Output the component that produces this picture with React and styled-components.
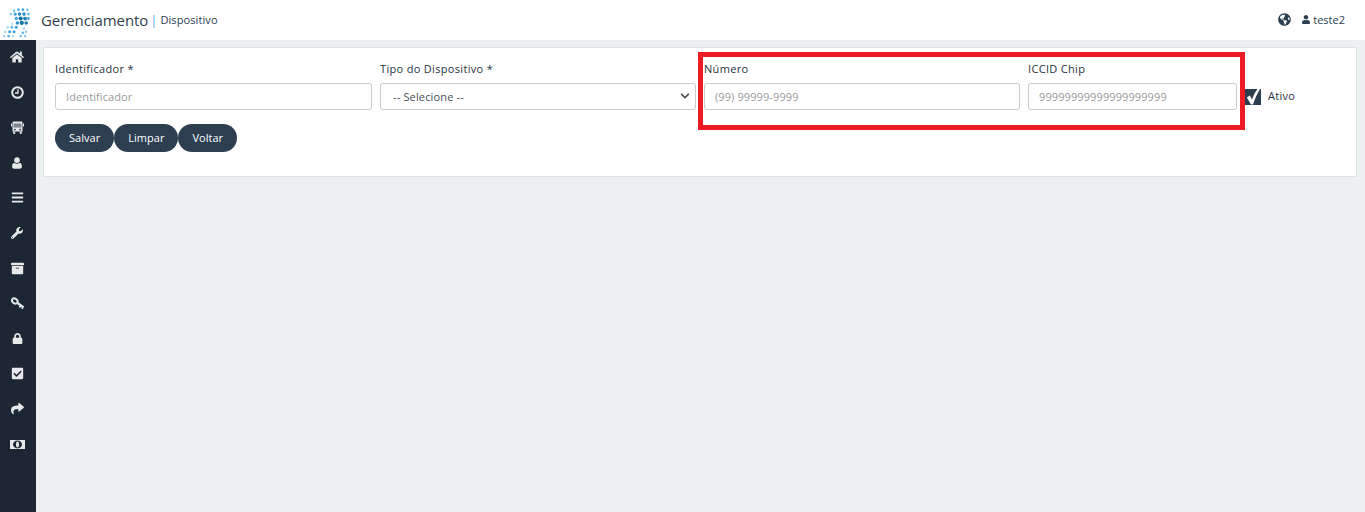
import React from 'react';
import styled, { createGlobalStyle } from 'styled-components';
import {
  FaHome, FaUser, FaBars, FaWrench, FaArchive, FaLock,
  FaCheckSquare, FaShare, FaGlobeAmericas, FaChevronDown,
} from 'react-icons/fa';

const GlobalStyle = createGlobalStyle`
  html, body {
    margin: 0;
    padding: 0;
    height: 100%;
    background: #ecf0f1;
    font-family: "Open Sans", "Liberation Sans", sans-serif;
    color: #2c3e50;
    overflow: hidden;
  }
  * { box-sizing: border-box; }
`;

const Page = styled.div`
  width: 1365px;
  height: 512px;
  display: flex;
  flex-direction: column;
`;

const Header = styled.header`
  height: 40px;
  background: #fff;
  display: flex;
  align-items: center;
  flex: none;
`;

const LogoBox = styled.div`
  width: 41px;
  flex: none;
  display: flex;
  padding-left: 2px;
`;

const Title = styled.span`
  font-size: 15px;
  font-weight: 500;
  letter-spacing: -0.08px;
  color: #333f4b;
  line-height: 40px;
`;

const Divider = styled.span`
  font-size: 13px;
  color: #5dade2;
  margin: 0 3px 0 2px;
`;

const SubTitle = styled.span`
  font-size: 11px;
  letter-spacing: 0.1px;
  color: #2c3e50;
  margin-top: -1px;
`;

const UserArea = styled.div`
  margin-left: auto;
  padding-right: 20px;
  display: flex;
  align-items: center;
  font-size: 11px;
  color: #2c3e50;
  margin-top: -1px;
`;

const GlobeIcon = styled(FaGlobeAmericas)`
  width: 13px;
  height: 13px;
  margin-right: 11px;
`;

const UserIcon = styled(FaUser)`
  width: 8px;
  height: 9px;
  margin-right: 3px;
`;

const Body = styled.div`
  flex: 1;
  display: flex;
  min-height: 0;
`;

const Sidebar = styled.nav`
  width: 36px;
  flex: none;
  background: #1c2733;
  padding-right: 2px;
  display: flex;
  flex-direction: column;
`;

const NavItem = styled.div`
  height: 35.2px;
  padding-bottom: 1px;
  display: flex;
  align-items: center;
  justify-content: center;
  color: #e6e8ea;
  svg {
    width: ${(p) => p.$size || 13}px;
    height: ${(p) => p.$size || 13}px;
  }
`;

const Main = styled.main`
  flex: 1;
  padding: 7px 8px 0 7px;
`;

const Card = styled.section`
  position: relative;
  height: 130px;
  background: #fff;
  border: 1px solid #dfe3e5;
  padding: 11px 11px 0;
`;

const FormRow = styled.div`
  display: grid;
  grid-template-columns: 317px 316px 316px 209px auto;
  column-gap: 8px;
`;

const Field = styled.div`
  display: flex;
  flex-direction: column;
`;

const Label = styled.label`
  font-size: 11px;
  font-weight: 500;
  line-height: 16px;
  letter-spacing: 0.32px;
  color: #28343f;
  margin-bottom: 5px;
  height: 19px;
  display: flex;
  align-items: center;
`;

const Input = styled.input`
  height: 27px;
  width: 100%;
  border: 1px solid #ccc;
  border-radius: 3px;
  padding: 0 10px;
  font-family: inherit;
  font-size: 11px;
  letter-spacing: 0.1px;
  outline: none;
  background: #fff;
  &::placeholder {
    color: #9a9a9a;
    opacity: 1;
  }
`;

const SelectBox = styled.div`
  height: 27px;
  border: 1px solid #ccc;
  border-radius: 3px;
  padding: 0 5px 0 12px;
  display: flex;
  align-items: center;
  justify-content: space-between;
  font-size: 11px;
  letter-spacing: 0.15px;
  color: #495057;
`;

const Chevron = styled(FaChevronDown)`
  width: 10px;
  height: 10px;
  color: #4a4f55;
  margin-top: -1px;
`;

const CheckField = styled.div`
  display: flex;
  align-items: center;
  margin-top: 24px;
  height: 27px;
`;

const CheckBoxMark = styled.span`
  position: relative;
  width: 16px;
  height: 16px;
  background: #2c3e50;
  margin-right: 7px;
  svg {
    position: absolute;
    left: 1px;
    top: -2px;
  }
`;

const CheckLabel = styled.span`
  font-size: 11px;
  font-weight: 500;
  letter-spacing: 0.3px;
  color: #28343f;
  margin-top: -2px;
`;

const Buttons = styled.div`
  display: flex;
  margin-top: 14px;
`;

const Button = styled.button`
  height: 28px;
  padding: 0 14px 2px;
  border: none;
  border-radius: 14px;
  background: #2c3e50;
  color: #fff;
  font-family: inherit;
  font-size: 11px;
  font-weight: 500;
  letter-spacing: 0.03px;
`;

const Highlight = styled.div`
  position: absolute;
  left: 654px;
  top: 4px;
  width: 547px;
  height: 78px;
  border: 5px solid #ed1c24;
  pointer-events: none;
`;

const dots = [
  [15, 10, 1.2, '#7cc4e8'], [19, 9, 1.3, '#5fb6e3'], [23, 9, 1.3, '#4aaadf'], [27, 9, 1.2, '#7cc4e8'],
  [12, 13, 1.2, '#8fcdec'], [16, 13, 1.5, '#3fa4dc'], [20, 13, 1.6, '#2a8fcb'], [24, 13, 1.6, '#2a8fcb'], [28, 13, 1.2, '#5fb6e3'],
  [17, 17, 1.5, '#3fa4dc'], [21, 17, 1.9, '#14709f'], [25, 17, 1.7, '#1d7fb5'], [28, 17, 1.3, '#4aaadf'],
  [18, 21, 1.6, '#2a8fcb'], [22, 21, 1.9, '#14709f'], [26, 21, 1.6, '#1d7fb5'], [13, 22, 1, '#a5d8f0'],
  [9, 25, 1.1, '#a5d8f0'], [13, 25, 1.3, '#5fb6e3'], [17, 25, 1.4, '#3fa4dc'], [24, 26, 1.1, '#a5d8f0'],
  [7, 29, 1.1, '#a5d8f0'], [11, 29, 1.4, '#3fa4dc'], [15, 29, 1.4, '#3fa4dc'], [23, 30, 1.2, '#5fb6e3'], [26, 29, 1.1, '#8fcdec'],
  [6, 33, 1.1, '#8fcdec'], [10, 33, 1.3, '#5fb6e3'], [14, 33, 1, '#a5d8f0'], [21, 33, 1.2, '#7cc4e8'], [25, 33, 1.1, '#7cc4e8'],
];

const Logo = () => (
  <svg width="30" height="36" viewBox="4 2 27.3 32.7">
    {dots.map(([cx, cy, r, fill], i) => (
      <circle key={i} cx={cx} cy={cy} r={r} fill={fill} />
    ))}
  </svg>
);

const ClockIcon = () => (
  <svg viewBox="0 0 13 13" fill="none" stroke="currentColor">
    <circle cx="6.5" cy="6.5" r="5.3" strokeWidth="2" />
    <path d="M7 3.2V7H4" strokeWidth="1.3" />
  </svg>
);

const BusIcon = () => (
  <svg viewBox="0 0 13 13" fill="currentColor">
    <path d="M2.5 0.5h8a1 1 0 0 1 1 1V10.500h-10V1.500a1 1 0 0 1 1-1z" />
    <rect x="2.600" y="2.400" width="7.800" height="4.200" fill="#7d8790" />
    <circle cx="3.800" cy="8.600" r="0.900" fill="#1c2733" />
    <circle cx="9.200" cy="8.600" r="0.900" fill="#1c2733" />
    <rect x="2.200" y="10.500" width="2" height="2.300" />
    <rect x="8.800" y="10.500" width="2" height="2.300" />
    <rect x="0" y="2.500" width="1" height="3" />
    <rect x="12" y="2.500" width="1" height="3" />
  </svg>
);

const BustIcon = () => (
  <svg viewBox="0 0 11 13" fill="currentColor">
    <circle cx="5.500" cy="3.400" r="3" />
    <path d="M2.400 6.200C3.200 7 4.300 7.400 5.500 7.400S7.800 7 8.600 6.200C10 6.500 10.800 8 10.800 10.200 10.800 11.800 9.800 12.600 8.600 12.600H2.400C1.200 12.600 0.200 11.800 0.200 10.200 0.200 8 1 6.500 2.400 6.200z" />
  </svg>
);

const KeyIcon = () => (
  <svg viewBox="0 0 13 13" fill="none" stroke="currentColor">
    <ellipse cx="3.800" cy="4" rx="3" ry="2.300" transform="rotate(35 3.800 4)" strokeWidth="2" />
    <path d="M6.500 6L12.500 10.200" strokeWidth="2.200" />
    <path d="M9.500 8.500L8.500 10.600M11.800 10L11 11.800" strokeWidth="1.700" />
  </svg>
);

const MoneyIcon = () => (
  <svg viewBox="0 0 15 10">
    <rect x="0" y="0.500" width="15" height="9" fill="currentColor" />
    <ellipse cx="7.500" cy="5" rx="4.500" ry="3.900" fill="#1c2733" />
    <ellipse cx="7.500" cy="5" rx="1.500" ry="3" fill="currentColor" />
  </svg>
);

const BigCheck = () => (
  <svg width="15" height="18" viewBox="0 0 15 18">
    <path d="M0.800 10.500L3.800 8.500 6 12.500C7.800 7.800 10 3.500 12.800 0.500H15C11.500 5.500 9 11.500 7 17.500H5z" fill="#fff" />
  </svg>
);

const navItems = [
  [FaHome, 14], [ClockIcon, 13], [BusIcon, 13], [BustIcon, 12], [FaBars, 13], [FaWrench, 12],
  [FaArchive, 13], [KeyIcon, 13], [FaLock, 11], [FaCheckSquare, 13], [FaShare, 13], [MoneyIcon, 15],
];

const App = () => {
  return (
    <Page>
      <GlobalStyle />
      <Header>
        <LogoBox><Logo /></LogoBox>
        <Title>Gerenciamento</Title>
        <Divider>|</Divider>
        <SubTitle>Dispositivo</SubTitle>
        <UserArea>
          <GlobeIcon />
          <UserIcon />
          teste2
        </UserArea>
      </Header>
      <Body>
        <Sidebar>
          {navItems.map(([Icon, size], i) => (
            <NavItem key={i} $size={size}><Icon /></NavItem>
          ))}
        </Sidebar>
        <Main>
          <Card>
            <FormRow>
              <Field>
                <Label>Identificador *</Label>
                <Input placeholder="Identificador" />
              </Field>
              <Field>
                <Label>Tipo do Dispositivo *</Label>
                <SelectBox>-- Selecione --<Chevron /></SelectBox>
              </Field>
              <Field>
                <Label>Número</Label>
                <Input placeholder="(99) 99999-9999" />
              </Field>
              <Field>
                <Label>ICCID Chip</Label>
                <Input placeholder="99999999999999999999" />
              </Field>
              <CheckField>
                <CheckBoxMark><BigCheck /></CheckBoxMark>
                <CheckLabel>Ativo</CheckLabel>
              </CheckField>
            </FormRow>
            <Buttons>
              <Button>Salvar</Button>
              <Button>Limpar</Button>
              <Button>Voltar</Button>
            </Buttons>
            <Highlight />
          </Card>
        </Main>
      </Body>
    </Page>
  );
};

export default App;
